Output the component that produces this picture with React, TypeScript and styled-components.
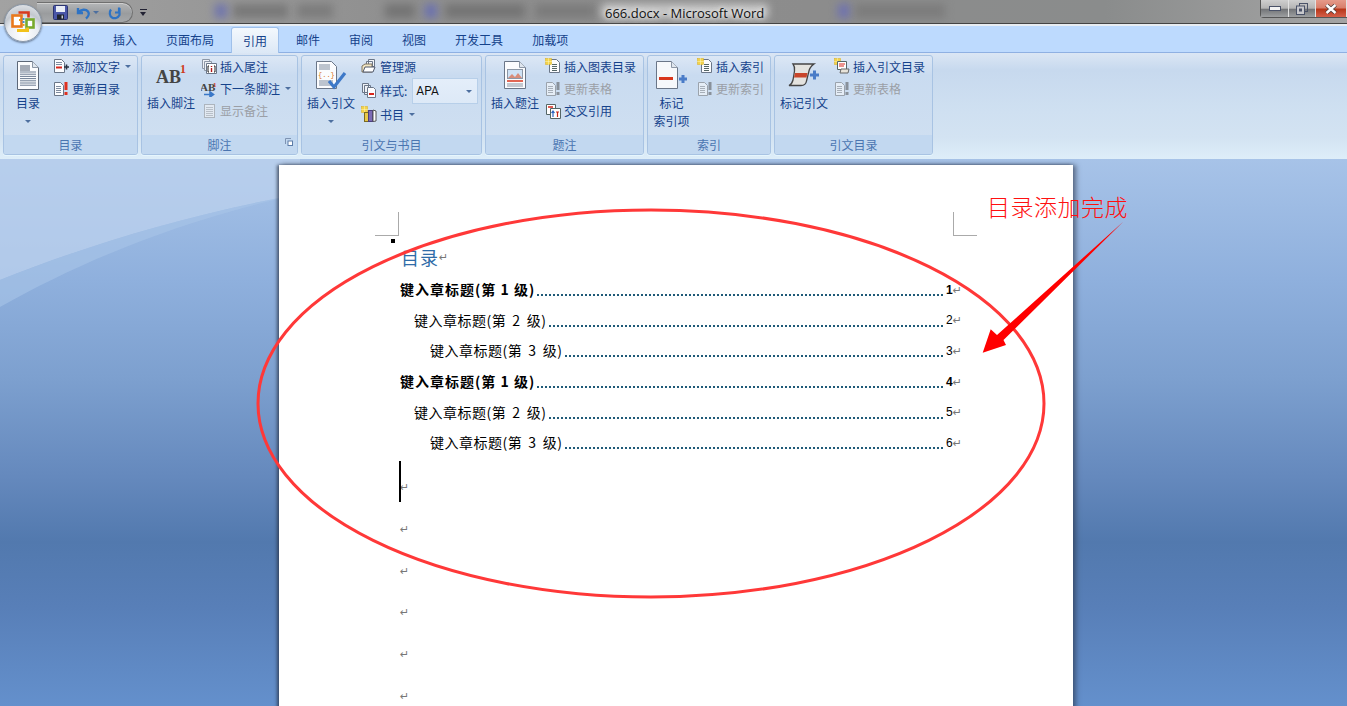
import React from "react"
import styled, { createGlobalStyle } from "styled-components"

const CJK = `"Noto Sans CJK SC", "Liberation Sans", sans-serif`

const GlobalStyle = createGlobalStyle`
  * { box-sizing: border-box; }
  html, body { margin: 0; padding: 0; }
  body { font-family: ${CJK}; font-size: 12px; overflow: hidden; }
`

const Window = styled.div`
  position: relative;
  display: flex;
  flex-direction: column;
  width: 1347px;
  height: 706px;
  overflow: hidden;
`

/* title bar */
const TitleBar = styled.div`
  position: relative;
  flex: none;
  display: flex;
  align-items: flex-start;
  height: 26px;
  padding-top: 2px;
  overflow: hidden;
  background: linear-gradient(90deg, #a2a2a2 0%, #8f8f8f 30%, #8c8c8c 60%, #8a8c8c 82%, #a4a4a4 100%);
  border-bottom: 2px solid #e8edf2;
`

const TitleEdge = styled.div`
  position: absolute;
  left: 0;
  right: 0;
  bottom: 0;
  height: 1px;
  background: #444;
`

const Smudge = styled.div<{ $left: number; $width: number; $color: string }>`
  position: absolute;
  top: 4px;
  left: ${(p) => p.$left}px;
  width: ${(p) => p.$width}px;
  height: 14px;
  background: ${(p) => p.$color};
  filter: blur(4px);
`

const Qat = styled.div`
  position: relative;
  display: flex;
  align-items: center;
  flex: none;
  width: 96px;
  height: 21px;
  margin-left: 37px;
  padding-left: 15px;
  border: 1px solid #6f6f6f;
  border-left: none;
  border-radius: 0 12px 12px 0;
  background: linear-gradient(#b4b6b8, #9a9c9e 55%, #a6a8aa);
  box-shadow: inset 0 1px 0 #cfcfcf;
`

const QatIcon = styled.span<{ $gap?: number }>`
  display: flex;
  margin-left: ${(p) => p.$gap ?? 0}px;
`

const QatMore = styled.span`
  position: relative;
  flex: none;
  margin: 7px 0 0 7px;
  width: 7px;
  height: 8px;
  border-top: 1px solid #223;
  &::after {
    content: "";
    position: absolute;
    top: 2px;
    left: 0;
    border: 3.5px solid transparent;
    border-top: 4px solid #223;
  }
`

const TitleText = styled.div`
  position: relative;
  flex: none;
  margin: 1px 0 0 458px;
  font-family: "Open Sans", "Liberation Sans", sans-serif;
  font-size: 13px;
  line-height: 20px;
  color: #111;
  text-shadow: 0 0 5px #fff, 0 0 8px #ddd;
  white-space: pre;
`

const WinButtons = styled.div`
  position: relative;
  flex: none;
  display: flex;
  height: 18px;
  margin: -2px 0 0 auto;
  border: 1px solid #555;
  border-top: none;
  border-right: none;
  border-radius: 0 0 0 4px;
`

const WinButton = styled.div<{ $width: number; $close?: boolean }>`
  display: flex;
  align-items: center;
  justify-content: center;
  width: ${(p) => p.$width}px;
  border-right: 1px solid #e2e2e2;
  background: ${(p) =>
    p.$close
      ? "linear-gradient(#e59a8a, #d97f6c 45%, #b8371a 55%, #d5604a)"
      : "linear-gradient(#cfcfcf, #b4b4b4 48%, #737578 55%, #9d9fa1)"};
`

/* tabs */
const TabBar = styled.div`
  flex: none;
  display: flex;
  gap: 5px;
  height: 27px;
  padding: 1px 0 0 48px;
  background: #bddafe;
  border-bottom: 1px solid #8fb0e2;
`

const Tab = styled.div<{ $active?: boolean }>`
  display: flex;
  align-items: center;
  height: 26px;
  padding: 0 12px 2px;
  color: #15428b;
  font-size: 12px;
  ${(p) =>
    p.$active &&
    `
    background: linear-gradient(#f3f8fd, #dce8f6);
    border: 1px solid #9fc0ea;
    border-bottom: none;
    border-radius: 3px 3px 0 0;
    padding: 0 11px 1px;
  `}
`

/* ribbon */
const Ribbon = styled.div`
  flex: none;
  display: flex;
  gap: 3px;
  height: 106px;
  padding: 2px 0 0 3px;
  background: linear-gradient(#dbe6f4 0, #c7d9ee 16%, #cfe0f1 55%, #d3e3f2 80%, #deeef9 100%);
`

const Group = styled.div<{ $width: number }>`
  display: flex;
  flex-direction: column;
  width: ${(p) => p.$width}px;
  height: 100px;
  border: 1px solid #a8c3e3;
  border-radius: 3px;
  background: linear-gradient(#dce7f5 0, #c9dbf0 20%, #d0e0f1 100%);
  box-shadow: 0 1px 0 #e6f6fd;
  overflow: hidden;
`

const GroupBody = styled.div<{ $gap?: number }>`
  display: flex;
  flex: 1;
  gap: ${(p) => p.$gap ?? 6}px;
  padding: 1px 0 0 5px;
`

const GroupFooter = styled.div`
  position: relative;
  flex: none;
  height: 19px;
  text-align: center;
  line-height: 19px;
  color: #4a75b0;
  background: #c2d8f0;
`

const Launcher = styled.span`
  position: absolute;
  right: 4px;
  top: 3px;
  display: flex;
`

const BigButton = styled.div<{ $width: number }>`
  display: flex;
  flex-direction: column;
  align-items: center;
  width: ${(p) => p.$width}px;
`

const BigIcon = styled.div`
  display: flex;
  align-items: flex-start;
  justify-content: center;
  height: 37px;
  padding-top: 3px;
`

const BigLabel = styled.div`
  height: 18px;
  line-height: 18px;
  color: #15428b;
  white-space: nowrap;
`

const Caret = styled.span<{ $dim?: boolean }>`
  display: inline-block;
  width: 0;
  height: 0;
  border: 3px solid transparent;
  border-top: 3px solid ${(p) => (p.$dim ? "#7d94b5" : "#4d6f9f")};
  border-bottom: none;
`

const BigCaret = styled(Caret)`
  margin-top: 8px;
`

const SmallColumn = styled.div<{ $rowHeight?: number }>`
  --row-height: ${(p) => p.$rowHeight ?? 22.4}px;
  display: flex;
  flex-direction: column;
  margin-top: ${(p) => (p.$rowHeight ? -3 : -2)}px;
`

const SmallRow = styled.div<{ $disabled?: boolean }>`
  display: flex;
  align-items: center;
  gap: 3px;
  height: var(--row-height);
  color: ${(p) => (p.$disabled ? "#9b9fa6" : "#15428b")};
  white-space: nowrap;
  & > svg {
    flex: none;
    ${(p) => p.$disabled && "filter: grayscale(1); opacity: 0.55;"}
  }
`

const RowCaret = styled(Caret)`
  margin-left: 2px;
`

const StyleBox = styled.div`
  display: flex;
  align-items: center;
  justify-content: space-between;
  flex: none;
  width: 66px;
  height: 26px;
  margin: 2px 0 0 2px;
  padding: 0 5px 0 3px;
  border: 1px solid #b7cfe9;
  background: linear-gradient(#e4eefa, #dde9f7);
  font-family: Roboto, "Liberation Sans", sans-serif;
  font-size: 12px;
  color: #111;
`

/* document area */
const DocArea = styled.div`
  position: relative;
  flex: 1;
  min-height: 0;
  overflow: hidden;
  padding: 6px 0 0 279px;
  background: linear-gradient(
    #a7c3e8 0,
    #8fb0dd 22%,
    #7da0cf 40%,
    #6589bd 58%,
    #5279ae 70%,
    #587fb8 82%,
    #6490cc 100%
  );
`

const Swoosh = styled.svg`
  position: absolute;
  top: 0;
  left: 0;
`

const Page = styled.div`
  position: relative;
  width: 794px;
  height: 560px;
  padding: 78px 111px 0 121px;
  background: #fff;
  box-shadow: -2px 0 3px rgba(40, 50, 70, 0.7), 3px 0 5px rgba(40, 50, 70, 0.6);
`

const CropMark = styled.div<{ $side: "left" | "right" }>`
  position: absolute;
  top: 47px;
  ${(p) => (p.$side === "left" ? "left: 96px;" : "left: 674px;")}
  width: 24px;
  height: 24px;
  border-bottom: 1px solid #aaa;
  ${(p) => (p.$side === "left" ? "border-right: 1px solid #aaa;" : "border-left: 1px solid #aaa;")}
`

const ParaDot = styled.div`
  position: absolute;
  top: 74px;
  left: 112px;
  width: 4px;
  height: 4px;
  background: #000;
`

const Heading = styled.div`
  display: flex;
  align-items: center;
  height: 31px;
  padding: 0 0 4px 1px;
  font-size: 18px;
  letter-spacing: 1px;
  color: #2f6ca8;
`

const ReturnMark = styled.span`
  margin-top: 2px;
  font-family: "DejaVu Sans", sans-serif;
  font-size: 11px;
  line-height: 1;
  letter-spacing: 0;
  font-weight: 400;
  color: #777;
`

const TocRow = styled.div<{ $level: number }>`
  display: flex;
  align-items: center;
  height: 30.6px;
  padding-left: ${(p) => [0, 14, 30][p.$level - 1]}px;
  font-size: 14px;
  letter-spacing: ${(p) => (p.$level === 1 ? 1 : 0.5)}px;
  word-spacing: ${(p) => (p.$level === 1 ? 0 : 2.5)}px;
  font-weight: ${(p) => (p.$level === 1 ? 700 : 400)};
  color: #000;
  white-space: pre;
`

const Leader = styled.span`
  flex: 1;
  height: 2px;
  margin: 12px 3px 0 2px;
  border-bottom: 2px dotted #1f5a78;
`

const PageNumber = styled.span`
  margin-top: 1px;
  font-family: "Liberation Sans", sans-serif;
  font-size: 12px;
  letter-spacing: 0;
`

const EmptyPara = styled.div<{ $first?: boolean }>`
  position: relative;
  display: flex;
  align-items: flex-end;
  height: 41.7px;
  margin-top: ${(p) => (p.$first ? 3 : 0)}px;
  padding-bottom: 9px;
`

const Caretbar = styled.div`
  position: absolute;
  top: 0;
  left: -1px;
  width: 2px;
  height: 41px;
  background: #000;
`

/* annotation on top of the screenshot */
const Annotation = styled.svg`
  position: absolute;
  top: 0;
  left: 0;
  pointer-events: none;
`

const AnnotationText = styled.div`
  position: absolute;
  top: 189px;
  left: 987px;
  font-size: 23px;
  line-height: 34px;
  font-weight: 300;
  letter-spacing: 0.5px;
  color: #ff1010;
  white-space: nowrap;
`

const OfficeButton = styled.div`
  position: absolute;
  top: 4px;
  left: 4px;
  width: 38px;
  height: 38px;
  border-radius: 50%;
  display: flex;
  align-items: center;
  justify-content: center;
  border: 1px solid #8b98a8;
  background: radial-gradient(circle at 50% 80%, #ffffff 0, #e8ecf2 45%, #c3c8cf 62%, #eef0f3 100%);
  box-shadow: 0 1px 2px rgba(40, 50, 70, 0.6);
`

/* icons */
const Doc = ({ x = 1.5, y = 1.5, w = 10, h = 13, fold = 3 }) => (
  <path
    d={`M${x} ${y}h${w - fold}l${fold} ${fold}v${h - fold}h-${w}z`}
    fill="#fbfcfe"
    stroke="#6a7688"
  />
)

const Sparkle = () => (
  <g fill="#f3d34a" stroke="#d9ae1c" strokeWidth="0.5">
    <rect x="0.5" y="0.5" width="6" height="6" />
    <path d="M3.5 0v7M0 3.5h7" stroke="#fff6c0" />
  </g>
)

const Lines = ({ x, y, n, w, color = "#7f8c9f", step = 2 }: { x: number; y: number; n: number; w: number; color?: string; step?: number }) => (
  <path d={Array.from({ length: n }, (_, i) => `M${x} ${y + i * step}h${w}`).join("")} stroke={color} fill="none" />
)

const Small = ({ children }: { children: React.ReactNode }) => (
  <svg width="16" height="16" viewBox="0 0 16 16">{children}</svg>
)

const AddTextIcon = () => (
  <Small>
    <Doc />
    <Lines x={3} y={4.5} n={2} w={6} />
    <path d="M3 9.5h6" stroke="#d8261c" strokeWidth="2" />
    <path d="M11 9h5M13.5 6.5v5" stroke="#2a3342" strokeWidth="1.6" />
  </Small>
)

const UpdateIcon = () => (
  <Small>
    <Doc w={9} />
    <Lines x={3} y={5.5} n={4} w={5} />
    <path d="M13 1v8" stroke="#e0301e" strokeWidth="3" />
    <rect x="11.5" y="11" width="3" height="3" fill="#e0301e" />
  </Small>
)

const EndnoteIcon = () => (
  <Small>
    <path d="M1.5 1.5h7v9h-7z" fill="#eef1f6" stroke="#8d97a6" />
    <path d="M3.5 3.5h7v9h-7z" fill="#eef1f6" stroke="#8d97a6" />
    <path d="M5.5 5.5h10v10h-10z" fill="#fff" stroke="#6a7688" />
    <path d="M8 8h-1v6h1M13 8h1v6h-1" stroke="#222" fill="none" />
    <path d="M10.5 8v1M10.5 10v4" stroke="#b01818" strokeWidth="1.4" />
  </Small>
)

const NextNoteIcon = () => (
  <Small>
    <text x="-1" y="10" fontFamily="Liberation Serif, serif" fontSize="11" fontWeight="700" fill="#444">AB</text>
    <text x="12" y="6" fontFamily="Liberation Serif, serif" fontSize="7" fontWeight="700" fill="#d33a1c">1</text>
    <path d="M3 13.5h8M9 11l3.5 2.5L9 16z" stroke="#3a78c8" strokeWidth="1.6" fill="#3a78c8" />
  </Small>
)

const ShowNotesIcon = () => (
  <Small>
    <rect x="3.5" y="1.5" width="10" height="13" fill="#f2f4f6" stroke="#8b95a3" />
    <Lines x={5} y={4.5} n={5} w={7} color="#a1a9b4" />
  </Small>
)

const SourcesIcon = () => (
  <Small>
    <path d="M7.5 1.5h6v7h-6zM5.5 3.5h6v7h-6z" fill="#f4f6f9" stroke="#6a7688" />
    <path d="M1 8l3-2h7v8H1z" fill="#f2e6c2" stroke="#7d7260" />
    <path d="M2 14l2-5h10l-2 5z" fill="#fff" stroke="#50586a" />
  </Small>
)

const StyleIcon = () => (
  <Small>
    <path d="M1.5 1.5h6v9h-6zM3.5 3.5h6v9h-6z" fill="#eef1f6" stroke="#6a7688" />
    <Doc x={6.5} y={5.5} w={8} h={10} fold={2} />
    <path d="M8 12h5" stroke="#d8261c" strokeWidth="2" />
  </Small>
)

const BibIcon = () => (
  <Small>
    <Sparkle />
    <rect x="3.5" y="6.5" width="4" height="9" fill="#e9c949" stroke="#7a6a22" />
    <rect x="7.5" y="4.5" width="4" height="11" fill="#7d6bb5" stroke="#4b3f7e" />
    <path d="M12 4l3 1v10l-3 .5z" fill="#fff" stroke="#555" />
  </Small>
)

const FigureListIcon = () => (
  <Small>
    <Doc x={4.5} w={10} h={13} />
    <Lines x={7} y={6.5} n={4} w={5} color="#566" />
    <Sparkle />
  </Small>
)

const CrossRefIcon = () => (
  <Small>
    <path d="M1.5 1.5h9v10h-9z" fill="#fff" stroke="#566" />
    <path d="M5.5 5.5h10v10h-10z" fill="#fff" stroke="#566" />
    <path d="M3 4h5" stroke="#d8261c" strokeWidth="1.5" />
    <path d="M8 8v6M6.5 10l1.5-2 1.5 2" stroke="#2b66c0" strokeWidth="1.2" fill="none" />
    <path d="M11 9h3M12.5 9v5" stroke="#c62a1a" strokeWidth="1.2" />
  </Small>
)

const CitationListIcon = () => (
  <Small>
    <Sparkle />
    <path d="M3.5 3.5h9v8h-9z" fill="#fff" stroke="#566" />
    <path d="M5 6h6M5 8h5" stroke="#d8261c" />
    <path d="M7 11h8l-1 4H6z" fill="#e8e4da" stroke="#666" />
  </Small>
)

const TocBigIcon = () => (
  <svg width="24" height="31" viewBox="0 0 24 31">
    <path d="M1.5 1.5h15l6 6v22h-21z" fill="#fbfcfe" stroke="#5d6878" />
    <path d="M16.5 1.5v6h6" fill="#dfe6ee" stroke="#8c97a6" />
    <Lines x={4} y={6} n={3} w={10} color="#505c70" step={2} />
    <Lines x={4} y={12} n={7} w={16} color="#6d7c92" step={2.2} />
  </svg>
)

const FootnoteBigIcon = () => (
  <svg width="32" height="28" viewBox="0 0 32 28">
    <text x="1" y="23" fontFamily="Liberation Serif, serif" fontSize="18" fill="#444" fontWeight="700">AB</text>
    <text x="25" y="13" fontFamily="Liberation Serif, serif" fontSize="12" fill="#cf3a1c" fontWeight="700">1</text>
  </svg>
)

const CitationBigIcon = () => (
  <svg width="32" height="31" viewBox="0 0 32 31">
    <path d="M1.5 1.5h15l5 5v22h-20z" fill="#fbfcfe" stroke="#6a7688" />
    <Lines x={4} y={5} n={3} w={11} color="#7f8c9f" />
    <text x="3" y="17" fontFamily="Liberation Mono, monospace" fontSize="7" fill="#d9761c">{"{..}"}</text>
    <Lines x={4} y={21} n={3} w={14} color="#7f8c9f" />
    <path d="M14 21l5 6L30 13" stroke="#3e79c8" strokeWidth="3.2" fill="none" />
  </svg>
)

const CaptionBigIcon = () => (
  <svg width="24" height="30" viewBox="0 0 24 30">
    <path d="M1.5 1.5h15l6 6v21h-21z" fill="#fbfcfe" stroke="#6a7688" />
    <path d="M16.5 1.5v6h6" fill="#dfe6ee" stroke="#8c97a6" />
    <rect x="4.5" y="9.5" width="15" height="9" fill="#cfe2f5" stroke="#8c97a6" />
    <path d="M5 18l4-4 3 3 3-4 4 5z" fill="#d88d7a" />
    <path d="M4 21h16" stroke="#d8361c" strokeWidth="1.5" />
    <path d="M4 24h16M4 26h16" stroke="#8a94a3" />
  </svg>
)

const MarkBigIcon = () => (
  <svg width="33" height="30" viewBox="0 0 33 30">
    <path d="M1.5 1.5h15l6 6v21h-21z" fill="#f6f8fb" stroke="#6a7688" />
    <path d="M16.5 1.5v6h6" fill="#dfe6ee" stroke="#8c97a6" />
    <path d="M4 18.500h14" stroke="#d8361c" strokeWidth="3" />
    <path d="M24 19h8M28 15v8" stroke="#4a7cc8" strokeWidth="3" />
  </svg>
)

const ScrollBigIcon = () => (
  <svg width="32" height="27" viewBox="0 0 32 27">
    <path d="M5 4H26C23 6 21 9 20.500 13L18.500 21C18 24 16 25.500 13 25.500H1C3 24.500 4.500 22 5 20L6.500 11C7 8 6.500 6 5 4Z" fill="#e4e3df" stroke="#454545" strokeWidth="1.300" />
    <path d="M7 13H19.500L18.500 17.500H6Z" fill="#c8452a" />
    <path d="M22 15h9M26.500 10.500v9" stroke="#4a7cc8" strokeWidth="3" />
  </svg>
)

const OfficeLogo = () => (
  <svg width="26" height="26" viewBox="0 0 26 26">
    <rect x="2.500" y="5.500" width="9" height="11" fill="#fff" stroke="#e9781c" strokeWidth="2.600" />
    <path d="M8.500 2.500h10v5" fill="none" stroke="#d8391d" strokeWidth="2.600" />
    <rect x="16.500" y="9.500" width="7" height="8" fill="#fff" stroke="#78aa2c" strokeWidth="2.600" />
    <path d="M7 20.500h10.500v-3" fill="none" stroke="#f2c21a" strokeWidth="3" />
    <g fill="#3f8fd0">
      <rect x="12.500" y="8" width="2" height="2" />
      <rect x="12.500" y="11" width="2" height="2" />
      <rect x="12.500" y="14" width="2" height="2" fill="#e89a1c" />
      <rect x="9" y="9" width="2" height="2" fill="#e89a1c" />
    </g>
  </svg>
)

const SaveIcon = () => (
  <svg width="15" height="15" viewBox="0 0 15 15">
    <rect x="0.5" y="0.5" width="14" height="14" rx="1" fill="#4a56a8" stroke="#2c3470" />
    <rect x="3" y="1" width="9" height="6" fill="#e8ecf6" />
    <rect x="4" y="9.5" width="7" height="5" fill="#20242e" />
    <rect x="8.5" y="10.5" width="1.5" height="3" fill="#c8ccd6" />
  </svg>
)

const UndoIcon = () => (
  <svg width="15" height="14" viewBox="0 0 15 14">
    <path d="M2 2v5h5M2.5 6.5C5 3 10 3 12 5.5c1.5 2 .5 5-2 7" stroke="#2e73c4" strokeWidth="2.4" fill="none" />
  </svg>
)

const RedoIcon = () => (
  <svg width="14" height="14" viewBox="0 0 14 14">
    <path d="M11 1.5v5H7M3 3.5C1 6 1.5 10 4 11.5c2.500 1.500 6 .5 7.500-2.500V2" stroke="#2e73c4" strokeWidth="2.2" fill="none" />
  </svg>
)

const RestoreGlyph = () => (
  <svg width="12" height="12" viewBox="0 0 12 12">
    <rect x="3.5" y="0.500" width="8" height="8" fill="none" stroke="#4a5268" />
    <rect x="0.500" y="3" width="8" height="8.500" fill="#c8c8cc" stroke="#4a5268" />
    <rect x="3" y="5.500" width="3" height="3" fill="#4a5268" />
  </svg>
)

const MinGlyph = () => (
  <svg width="12" height="6" viewBox="0 0 12 6">
    <rect x="0.500" y="0.500" width="11" height="4" fill="#f2f2f2" stroke="#4a5268" />
  </svg>
)

const CloseGlyph = () => (
  <svg width="12" height="10" viewBox="0 0 12 10">
    <path d="M1.500 1l9 8M10.500 1l-9 8" stroke="#4a3a3a" strokeWidth="4" />
    <path d="M1.500 1l9 8M10.500 1l-9 8" stroke="#fff" strokeWidth="2.400" />
  </svg>
)

const LauncherIcon = () => (
  <svg width="8" height="8" viewBox="0 0 8 8">
    <path d="M.5 6V.5H6" stroke="#7e93b2" fill="none" />
    <rect x="3" y="3" width="4.500" height="4.500" fill="#fff" stroke="#5c7ca8" />
  </svg>
)

const tocRows = [
  { level: 1, title: "键入章标题(第 1 级)", page: 1 },
  { level: 2, title: "键入章标题(第 2 级)", page: 2 },
  { level: 3, title: "键入章标题(第 3 级)", page: 3 },
  { level: 1, title: "键入章标题(第 1 级)", page: 4 },
  { level: 2, title: "键入章标题(第 2 级)", page: 5 },
  { level: 3, title: "键入章标题(第 3 级)", page: 6 },
]

const tabs = ["开始", "插入", "页面布局", "引用", "邮件", "审阅", "视图", "开发工具", "加载项"]

const smudges = [
  { left: 233, width: 55, color: "#787878" },
  { left: 297, width: 36, color: "#7c7c7c" },
  { left: 385, width: 30, color: "#747474" },
  { left: 425, width: 12, color: "#6a70b0" },
  { left: 445, width: 80, color: "#747474" },
  { left: 215, width: 12, color: "#6f74ad" },
  { left: 838, width: 12, color: "#6f72b0" },
  { left: 855, width: 90, color: "#7c7c7c" },
  { left: 535, width: 60, color: "#7b7b7b" },
  { left: 602, width: 166, color: "#c8c8c8" },
]

const App: React.FC = () => {
  return (
    <Window>
      <GlobalStyle />
      <TitleBar>
        {smudges.map((s) => (
          <Smudge key={s.left} $left={s.left} $width={s.width} $color={s.color} />
        ))}
        <TitleEdge />
        <Qat>
          <QatIcon $gap={1}><SaveIcon /></QatIcon>
          <QatIcon $gap={8}><UndoIcon /></QatIcon>
          <QatIcon $gap={2}><Caret /></QatIcon>
          <QatIcon $gap={9}><RedoIcon /></QatIcon>
        </Qat>
        <QatMore />
        <TitleText>666.docx - Microsoft Word</TitleText>
        <WinButtons>
          <WinButton $width={28}><MinGlyph /></WinButton>
          <WinButton $width={27}><RestoreGlyph /></WinButton>
          <WinButton $width={31} $close><CloseGlyph /></WinButton>
        </WinButtons>
      </TitleBar>

      <TabBar>
        {tabs.map((t) => (
          <Tab key={t} $active={t === "引用"}>{t}</Tab>
        ))}
      </TabBar>

      <Ribbon>
        <Group $width={135}>
          <GroupBody>
            <BigButton $width={38}>
              <BigIcon><TocBigIcon /></BigIcon>
              <BigLabel>目录</BigLabel>
              <BigCaret />
            </BigButton>
            <SmallColumn>
              <SmallRow><AddTextIcon />添加文字<RowCaret /></SmallRow>
              <SmallRow><UpdateIcon />更新目录</SmallRow>
            </SmallColumn>
          </GroupBody>
          <GroupFooter>目录</GroupFooter>
        </Group>

        <Group $width={157}>
          <GroupBody>
            <BigButton $width={48}>
              <BigIcon><FootnoteBigIcon /></BigIcon>
              <BigLabel>插入脚注</BigLabel>
            </BigButton>
            <SmallColumn>
              <SmallRow><EndnoteIcon />插入尾注</SmallRow>
              <SmallRow><NextNoteIcon />下一条脚注<RowCaret /></SmallRow>
              <SmallRow $disabled><ShowNotesIcon />显示备注</SmallRow>
            </SmallColumn>
          </GroupBody>
          <GroupFooter>
            脚注
            <Launcher><LauncherIcon /></Launcher>
          </GroupFooter>
        </Group>

        <Group $width={181}>
          <GroupBody>
            <BigButton $width={48}>
              <BigIcon><CitationBigIcon /></BigIcon>
              <BigLabel>插入引文</BigLabel>
              <BigCaret />
            </BigButton>
            <SmallColumn $rowHeight={24}>
              <SmallRow><SourcesIcon />管理源</SmallRow>
              <SmallRow>
                <StyleIcon />样式:
                <StyleBox>APA<Caret /></StyleBox>
              </SmallRow>
              <SmallRow><BibIcon />书目<RowCaret /></SmallRow>
            </SmallColumn>
          </GroupBody>
          <GroupFooter>引文与书目</GroupFooter>
        </Group>

        <Group $width={159}>
          <GroupBody>
            <BigButton $width={48}>
              <BigIcon><CaptionBigIcon /></BigIcon>
              <BigLabel>插入题注</BigLabel>
            </BigButton>
            <SmallColumn>
              <SmallRow><FigureListIcon />插入图表目录</SmallRow>
              <SmallRow $disabled><UpdateIcon />更新表格</SmallRow>
              <SmallRow><CrossRefIcon />交叉引用</SmallRow>
            </SmallColumn>
          </GroupBody>
          <GroupFooter>题注</GroupFooter>
        </Group>

        <Group $width={124}>
          <GroupBody $gap={7}>
            <BigButton $width={37}>
              <BigIcon><MarkBigIcon /></BigIcon>
              <BigLabel>标记</BigLabel>
              <BigLabel>索引项</BigLabel>
            </BigButton>
            <SmallColumn>
              <SmallRow><FigureListIcon />插入索引</SmallRow>
              <SmallRow $disabled><UpdateIcon />更新索引</SmallRow>
            </SmallColumn>
          </GroupBody>
          <GroupFooter>索引</GroupFooter>
        </Group>

        <Group $width={159}>
          <GroupBody>
            <BigButton $width={48}>
              <BigIcon><ScrollBigIcon /></BigIcon>
              <BigLabel>标记引文</BigLabel>
            </BigButton>
            <SmallColumn>
              <SmallRow><CitationListIcon />插入引文目录</SmallRow>
              <SmallRow $disabled><UpdateIcon />更新表格</SmallRow>
            </SmallColumn>
          </GroupBody>
          <GroupFooter>引文目录</GroupFooter>
        </Group>
      </Ribbon>

      <DocArea>
        <Swoosh width="300" height="160" viewBox="0 0 300 160">
          <path d="M0 0H300V35C190 55 90 85 0 121Z" fill="#bcd2ee" fillOpacity="0.75" />
          <path d="M0 148C85 100 185 60 300 35V35C190 55 90 85 0 121Z" fill="#a9c4e7" fillOpacity="0.6" />
        </Swoosh>
        <Page>
          <CropMark $side="left" />
          <CropMark $side="right" />
          <ParaDot />
          <Heading>目录<ReturnMark>↵</ReturnMark></Heading>
          {tocRows.map((r) => (
            <TocRow key={r.page} $level={r.level}>
              {r.title}
              <Leader />
              <PageNumber>{r.page}</PageNumber>
              <ReturnMark>↵</ReturnMark>
            </TocRow>
          ))}
          <EmptyPara $first>
            <Caretbar />
            <ReturnMark>↵</ReturnMark>
          </EmptyPara>
          {[0, 1, 2, 3, 4].map((i) => (
            <EmptyPara key={i}>
              <ReturnMark>↵</ReturnMark>
            </EmptyPara>
          ))}
        </Page>
      </DocArea>

      <OfficeButton><OfficeLogo /></OfficeButton>

      <Annotation width="1347" height="706" viewBox="0 0 1347 706">
        <ellipse cx="651" cy="403.500" rx="393" ry="193.500" fill="none" stroke="#ff3838" strokeWidth="3" />
        <path d="M1123.500 221.500L997 335L990.700 329.300L982.700 352.700L1006 345L1003.500 340Z" fill="#ff0000" />
      </Annotation>
      <AnnotationText>目录添加完成</AnnotationText>
    </Window>
  )
}

export default App
